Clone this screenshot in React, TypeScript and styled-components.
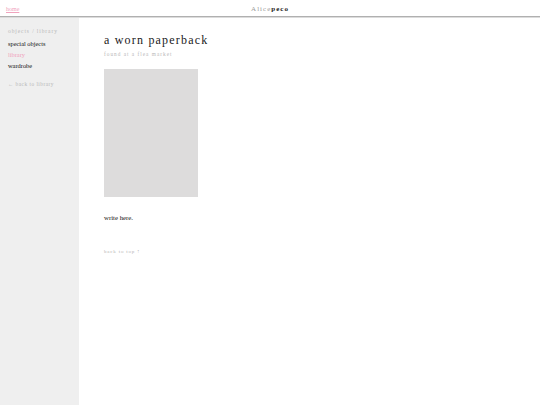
import React from 'react'
import styled, {createGlobalStyle} from 'styled-components'

const GlobalStyle = createGlobalStyle`
  html, body {
    margin: 0;
    padding: 0;
    height: 100%;
    background: #ffffff;
    font-family: "Liberation Serif", "Times New Roman", serif;
  }
  #root {
    min-height: 100%;
  }
`

const colors = {
  pink: '#f0a3bd',
  grey: '#b8b8b8',
  dark: '#222222',
  sidebar: '#efefef',
  placeholder: '#dddcdc',
  rule: '#b0b0b0',
}

const Page = styled.div`
  display: flex;
  flex-direction: column;
  height: 405px;
`

const Header = styled.header`
  display: grid;
  grid-template-columns: 1fr auto 1fr;
  align-items: center;
  height: 16px;
  line-height: 10px;
  padding: 0 6px;
  border-bottom: 1px solid ${colors.rule};
  box-shadow: 0 1px 0 #dcdcdc;
`

const HomeCell = styled.div`
  padding-bottom: 2px;
`

const HomeLink = styled.a`
  font-size: 6px;
  color: ${colors.pink};
  text-decoration: underline;
`

const Brand = styled.div`
  font-size: 7px;
  letter-spacing: 1px;
  color: #9a9a9a;
  padding-top: 1px;

  b {
    color: ${colors.dark};
    font-weight: bold;
  }
`

const Body = styled.div`
  flex: 1;
  display: flex;
  margin-top: 1px;
`

const Sidebar = styled.aside`
  width: 79px;
  background: ${colors.sidebar};
  padding: 10px 0 0 8px;
  box-sizing: border-box;
`

const Crumb = styled.div`
  font-size: 5.5px;
  letter-spacing: 0.9px;
  color: ${colors.grey};
  margin-bottom: 4px;
`

const NavList = styled.ul`
  list-style: none;
  margin: 0;
  padding: 0;
`

const NavItem = styled.li<{$active?: boolean}>`
  font-size: 6.4px;
  line-height: 11px;
  color: ${p => (p.$active ? colors.pink : '#111111')};
`

const BackLink = styled.div`
  margin-top: 10px;
  font-size: 5.3px;
  letter-spacing: 0.5px;
  color: ${colors.grey};
`

const Main = styled.main`
  flex: 1;
  padding: 15px 0 0 25px;
`

const Title = styled.h1`
  margin: 0;
  font-weight: normal;
  font-size: 12px;
  line-height: 14px;
  letter-spacing: 1.2px;
  color: ${colors.dark};
`

const Subtitle = styled.div`
  margin-top: 4px;
  font-size: 5.3px;
  letter-spacing: 1px;
  color: ${colors.grey};
`

const Cover = styled.div`
  margin-top: 12px;
  width: 94px;
  height: 128px;
  background: ${colors.placeholder};
`

const Note = styled.p`
  margin: 17px 0 0;
  font-size: 6.8px;
  color: #111111;
`

const TopLink = styled.div`
  margin-top: 28px;
  font-size: 5px;
  letter-spacing: 0.8px;
  color: ${colors.grey};
`

const App: React.FunctionComponent = () => (
  <>
    <GlobalStyle />
    <Page>
      <Header>
        <HomeCell>
          <HomeLink href="#">home</HomeLink>
        </HomeCell>
        <Brand>
          Alice<b>peco</b>
        </Brand>
        <div />
      </Header>
      <Body>
        <Sidebar>
          <Crumb>objects / library</Crumb>
          <NavList>
            <NavItem>special objects</NavItem>
            <NavItem $active>library</NavItem>
            <NavItem>wardrobe</NavItem>
          </NavList>
          <BackLink>← back to library</BackLink>
        </Sidebar>
        <Main>
          <Title>a worn paperback</Title>
          <Subtitle>found at a flea market</Subtitle>
          <Cover />
          <Note>write here.</Note>
          <TopLink>back to top ↑</TopLink>
        </Main>
      </Body>
    </Page>
  </>
)

export default App
